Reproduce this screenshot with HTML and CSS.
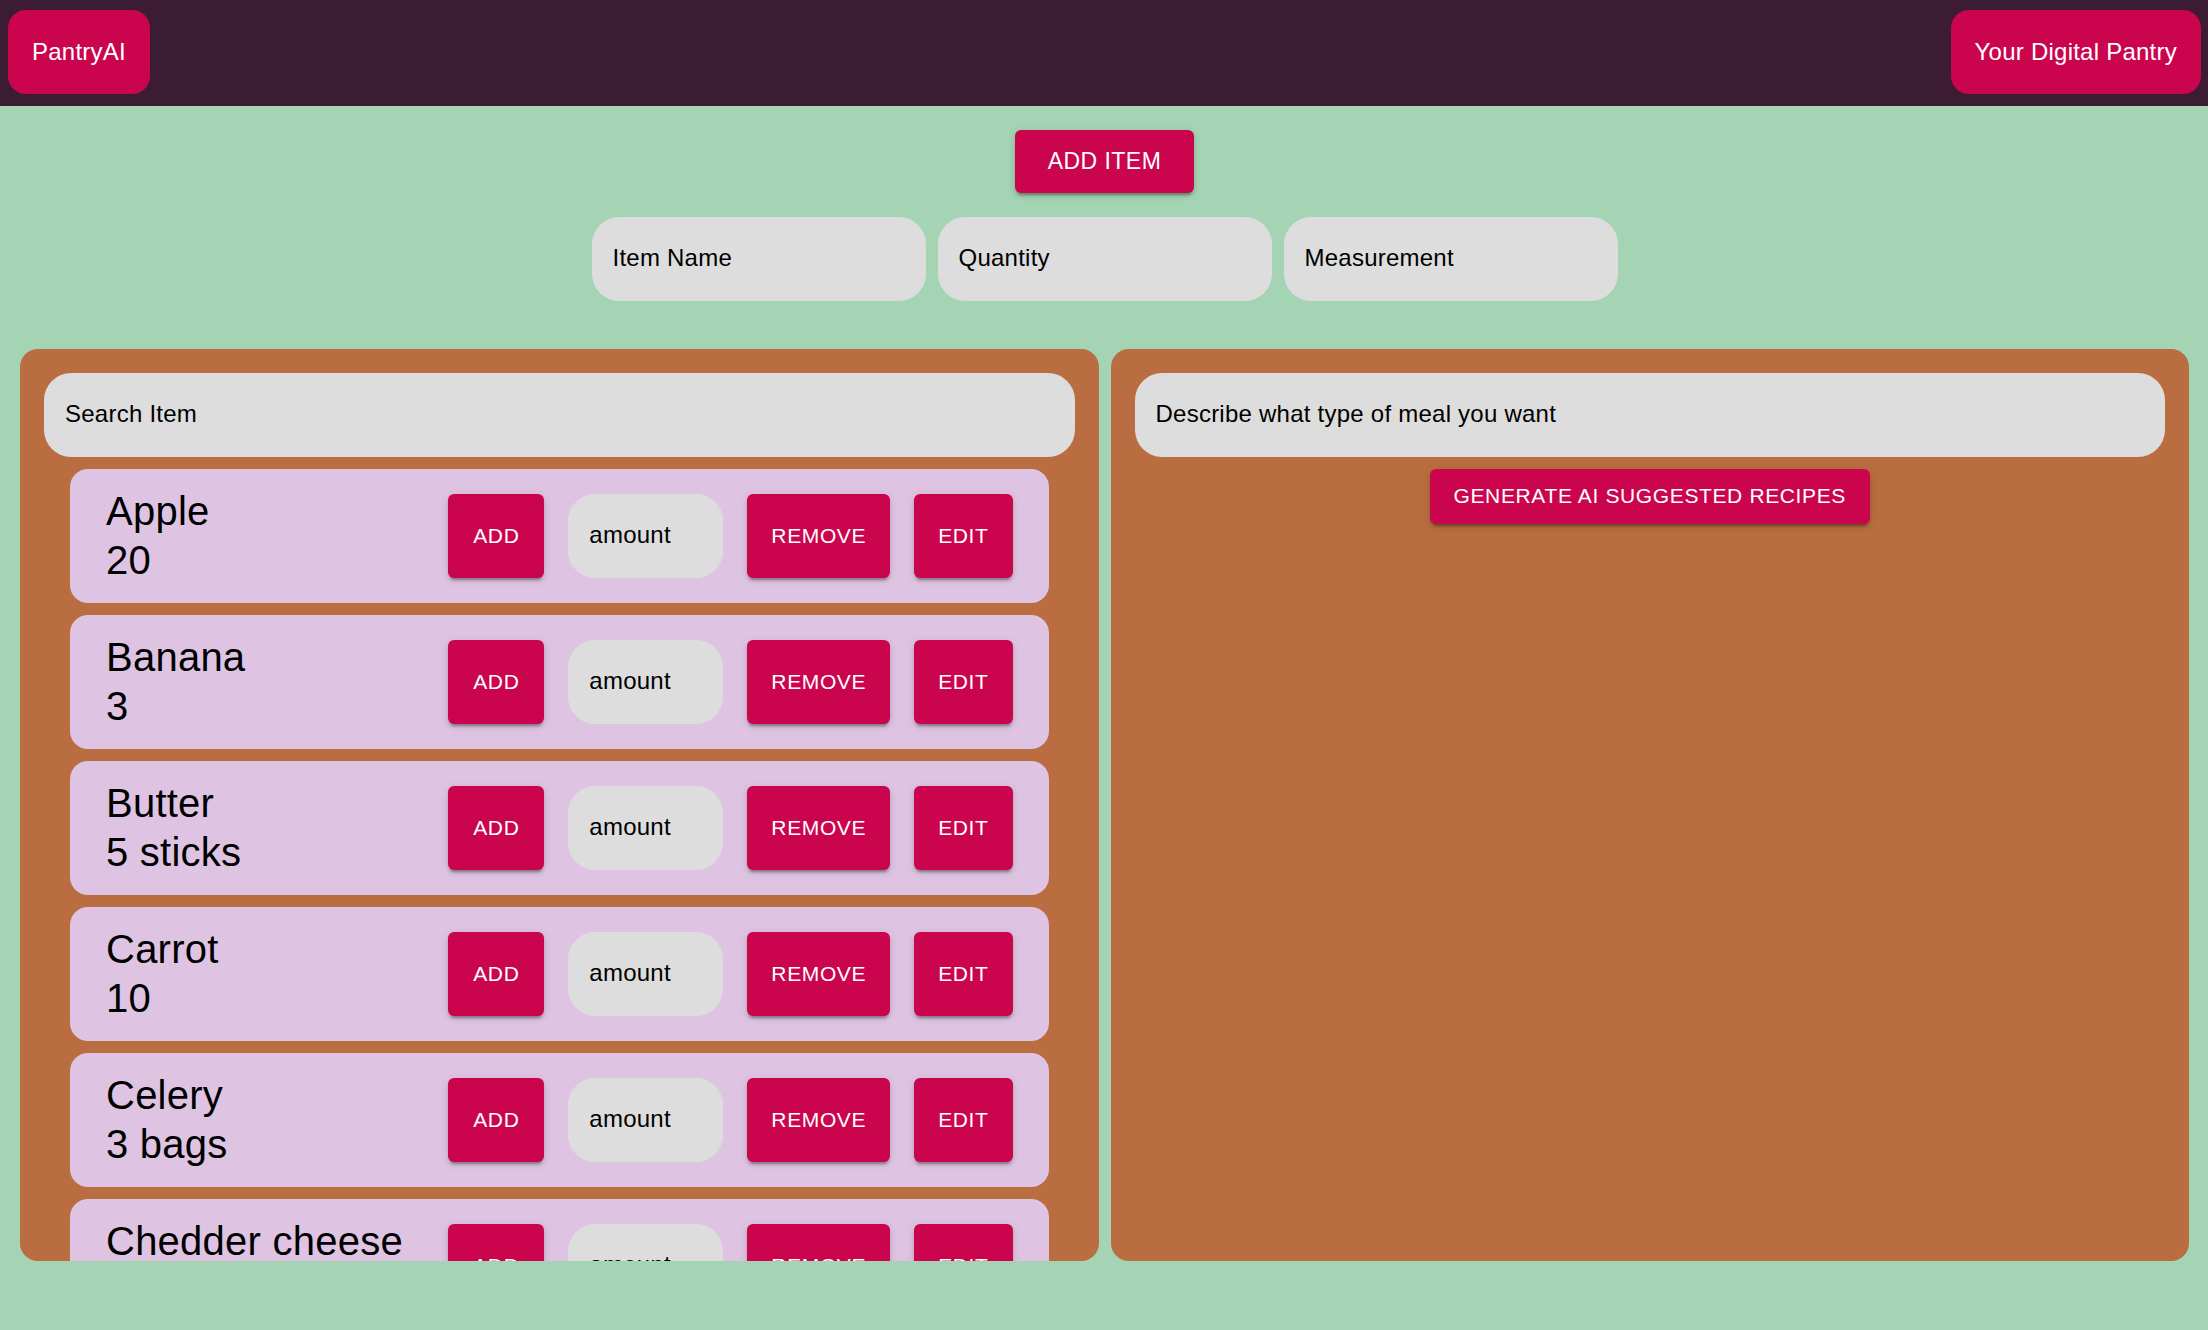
FILE: index.html
```html
<!DOCTYPE html>
<html lang="en">
<head>
<meta charset="utf-8">
<meta name="viewport" content="width=device-width, initial-scale=1">
<title>PantryAI</title>
<link rel="stylesheet" href="styles.css">
</head>
<body>
<header class="navbar">
  <a class="nav-link" href="#home">PantryAI</a>
  <a class="nav-link" href="#pantry">Your Digital Pantry</a>
</header>
<main class="page">
  <form class="add-form">
    <button class="btn btn-large" type="button">ADD ITEM</button>
    <div class="add-fields">
      <input class="field" type="text" placeholder="Item Name" aria-label="Item Name">
      <input class="field" type="text" placeholder="Quantity" aria-label="Quantity">
      <input class="field" type="text" placeholder="Measurement" aria-label="Measurement">
    </div>
  </form>
  <div class="panels">
    <section class="panel">
      <input class="field" type="text" placeholder="Search Item" aria-label="Search Item">
      <ul class="items">
        <li class="item">
          <div class="item-text">Apple<br>20</div>
          <button class="btn btn-tall" type="button">ADD</button>
          <input class="field field-amount" type="text" placeholder="amount" aria-label="Apple amount">
          <button class="btn btn-tall" type="button">REMOVE</button>
          <button class="btn btn-tall" type="button">EDIT</button>
        </li>
        <li class="item">
          <div class="item-text">Banana<br>3</div>
          <button class="btn btn-tall" type="button">ADD</button>
          <input class="field field-amount" type="text" placeholder="amount" aria-label="Banana amount">
          <button class="btn btn-tall" type="button">REMOVE</button>
          <button class="btn btn-tall" type="button">EDIT</button>
        </li>
        <li class="item">
          <div class="item-text">Butter<br>5 sticks</div>
          <button class="btn btn-tall" type="button">ADD</button>
          <input class="field field-amount" type="text" placeholder="amount" aria-label="Butter amount">
          <button class="btn btn-tall" type="button">REMOVE</button>
          <button class="btn btn-tall" type="button">EDIT</button>
        </li>
        <li class="item">
          <div class="item-text">Carrot<br>10</div>
          <button class="btn btn-tall" type="button">ADD</button>
          <input class="field field-amount" type="text" placeholder="amount" aria-label="Carrot amount">
          <button class="btn btn-tall" type="button">REMOVE</button>
          <button class="btn btn-tall" type="button">EDIT</button>
        </li>
        <li class="item">
          <div class="item-text">Celery<br>3 bags</div>
          <button class="btn btn-tall" type="button">ADD</button>
          <input class="field field-amount" type="text" placeholder="amount" aria-label="Celery amount">
          <button class="btn btn-tall" type="button">REMOVE</button>
          <button class="btn btn-tall" type="button">EDIT</button>
        </li>
        <li class="item">
          <div class="item-text">Chedder cheese<br>&nbsp;</div>
          <button class="btn btn-tall" type="button">ADD</button>
          <input class="field field-amount" type="text" placeholder="amount" aria-label="Chedder cheese amount">
          <button class="btn btn-tall" type="button">REMOVE</button>
          <button class="btn btn-tall" type="button">EDIT</button>
        </li>
      </ul>
    </section>
    <section class="panel">
      <input class="field" type="text" placeholder="Describe what type of meal you want" aria-label="Describe what type of meal you want">
      <button class="btn btn-center" type="button">GENERATE AI SUGGESTED RECIPES</button>
    </section>
  </div>
</main>
</body>
</html>
```
FILE: styles.css
```css
* {
  box-sizing: border-box;
}

body {
  margin: 0;
  height: 100vh;
  display: flex;
  flex-direction: column;
  background: #a4d4b4;
  color: #000;
  font-family: "Liberation Sans", Arial, sans-serif;
  font-size: 24px;
  letter-spacing: 0.01em;
}

.navbar {
  display: flex;
  justify-content: space-between;
  padding: 10px 7px 12px 8px;
  background: #3b1c32;
}

.nav-link {
  padding: 24px;
  border-radius: 18px;
  background: #ca054d;
  color: #fff;
  letter-spacing: 0.01em;
  line-height: 36px;
  text-decoration: none;
}

.page {
  flex: 1;
  min-height: 0;
  display: flex;
  flex-direction: column;
  gap: 48px;
  padding: 24px 19px 69px 20px;
}

.add-form {
  display: flex;
  flex-direction: column;
  align-items: center;
  gap: 24px;
}

.add-fields {
  display: flex;
  gap: 12px;
}

.field {
  width: 334px;
  height: 84px;
  padding: 0 21px 2px;
  border: 0;
  border-radius: 27px;
  background: #ddd;
  color: #000;
  font: inherit;
  letter-spacing: 0.01em;
}

.field::placeholder {
  color: #000;
  opacity: 1;
}

.btn {
  min-width: 96px;
  padding: 8px 24px 10px;
  border: 0;
  border-radius: 6px;
  background: #ca054d;
  color: #fff;
  box-shadow:
    0 5px 2px -3px rgba(0, 0, 0, 0.2),
    0 3px 3px rgba(0, 0, 0, 0.14),
    0 2px 8px rgba(0, 0, 0, 0.12);
  font-family: inherit;
  font-size: 21px;
  line-height: 37px;
  letter-spacing: 0.03em;
}

.btn-large {
  padding: 12px 33px;
  font-size: 23px;
  line-height: 39px;
  letter-spacing: 0.02em;
}

.btn-tall {
  height: 84px;
}

.btn-center {
  align-self: center;
}

.panels {
  flex: 1;
  min-height: 0;
  display: grid;
  grid-template-columns: 1fr 1fr;
  gap: 12px;
}

.panel {
  display: flex;
  flex-direction: column;
  gap: 12px;
  min-height: 0;
  padding: 24px 24px 0;
  border-radius: 18px;
  background: #b96d40;
}

.panel > .field {
  flex: none;
  width: 100%;
}

.items {
  flex: 1;
  min-height: 0;
  display: flex;
  flex-direction: column;
  gap: 12px;
  margin: 0;
  padding: 0 26px;
  overflow: hidden;
  list-style: none;
}

.item {
  flex: none;
  display: flex;
  align-items: center;
  gap: 24px;
  padding: 18px 36px;
  border-radius: 18px;
  background: #dec4e2;
}

.item-text {
  flex: 1;
  font-size: 40px;
  line-height: 49px;
}

.item .field-amount {
  width: 155px;
}
```
